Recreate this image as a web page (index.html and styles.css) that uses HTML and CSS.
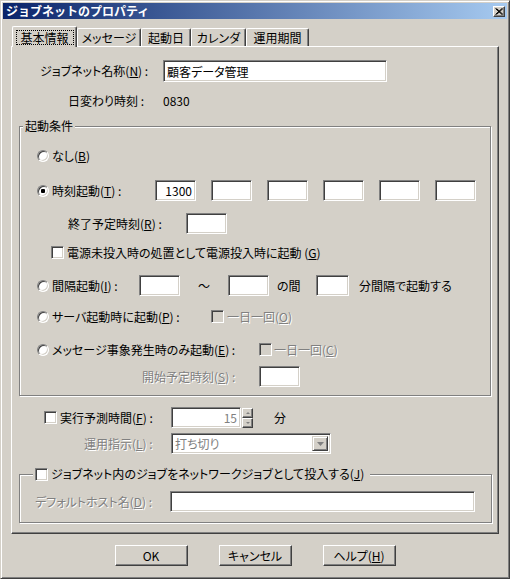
FILE: index.html
```
<!DOCTYPE html>
<html lang="ja">
<head>
    <meta charset="UTF-8">
    <title>ジョブネットのプロパティ</title>
    <link rel="stylesheet" href="styles.css">
</head>
<body>
    <div class="window">
        <div class="titlebar">
            <span>ジョブネットのプロパティ</span>
            <span class="close">
                <svg width="8" height="7" viewBox="0 0 8 7"><path d="M0.5 0.5L7 6.5M1.5 0.5L8 6.5M7 0.5L0.5 6.5M8 0.5L1.5 6.5" stroke="#000" stroke-width="1"/></svg>
            </span>
        </div>

        <div class="tabs">
            <div class="tab active t1"><span class="focus">基本情報</span></div>
            <div class="tab t2">メッセージ</div>
            <div class="tab t3">起動日</div>
            <div class="tab t4">カレンダ</div>
            <div class="tab t5">運用期間</div>
        </div>

        <div class="panel">
            <div class="row r-name">
                <span class="lbl w-name">ジョブネット名称(<u>N</u>) :</span>
                <input class="edit e-name" type="text" value="顧客データ管理">
            </div>
            <div class="row r-date">
                <span class="lbl w-date">日変わり時刻 :</span>
                <span>0830</span>
            </div>

            <fieldset class="group g-start">
                <legend>起動条件</legend>
                <div class="row r-none">
                    <span class="radio"></span>
                    <span>なし(<u>B</u>)</span>
                </div>
                <div class="row r-time">
                    <span class="radio on"></span>
                    <span class="lbl w-time">時刻起動(<u>T</u>) :</span>
                    <input class="edit e-time num" type="text" value="1300">
                    <input class="edit e-time" type="text">
                    <input class="edit e-time" type="text">
                    <input class="edit e-time" type="text">
                    <input class="edit e-time" type="text">
                    <input class="edit e-time last" type="text">
                </div>
                <div class="row r-end">
                    <span class="lbl w-end">終了予定時刻(<u>R</u>) :</span>
                    <input class="edit e-short" type="text">
                </div>
                <div class="row r-power">
                    <span class="check"></span>
                    <span>電源未投入時の処置として電源投入時に起動 (<u>G</u>)</span>
                </div>
                <div class="row r-interval">
                    <span class="radio"></span>
                    <span class="lbl w-interval">間隔起動(<u>I</u>) :</span>
                    <input class="edit e-short" type="text">
                    <span class="tilde">～</span>
                    <input class="edit e-short" type="text">
                    <span class="between">の間</span>
                    <input class="edit e-min" type="text">
                    <span class="every">分間隔で起動する</span>
                </div>
                <div class="row r-server">
                    <span class="radio"></span>
                    <span class="lbl w-server">サーバ起動時に起動(<u>P</u>) :</span>
                    <span class="check off"></span>
                    <span class="dis once">一日一回(<u>O</u>)</span>
                </div>
                <div class="row r-msg">
                    <span class="radio"></span>
                    <span class="lbl w-msg">メッセージ事象発生時のみ起動(<u>E</u>) :</span>
                    <span class="check off"></span>
                    <span class="dis once-b">一日一回(<u>C</u>)</span>
                </div>
                <div class="row r-begin">
                    <span class="lbl dis w-begin">開始予定時刻(<u>S</u>) :</span>
                    <input class="edit e-short" type="text">
                </div>
            </fieldset>

            <div class="row r-exec">
                <span class="check"></span>
                <span class="lbl w-exec">実行予測時間(<u>F</u>) :</span>
                <input class="edit e-spin num dis" type="text" value="15">
                <span class="spin">
                    <span class="sbtn"><span class="tri-up"></span></span>
                    <span class="sbtn"><span class="tri-down"></span></span>
                </span>
                <span class="unit">分</span>
            </div>
            <div class="row r-mode">
                <span class="lbl dis w-mode">運用指示(<u>L</u>) :</span>
                <span class="combo">
                    <span class="dis-plain">打ち切り</span>
                    <span class="drop">
                        <svg width="7" height="4" viewBox="0 0 7 4"><path d="M0 0H7L3.5 4Z" fill="#808080"/></svg>
                    </span>
                </span>
            </div>

            <fieldset class="group g-net">
                <legend><span class="check"></span><span>ジョブネット内のジョブをネットワークジョブとして投入する(<u>J</u>)</span></legend>
                <div class="row r-host">
                    <span class="lbl dis w-host">デフォルトホスト名(<u>D</u>) :</span>
                    <input class="edit e-host" type="text">
                </div>
            </fieldset>
        </div>

        <div class="buttons">
            <button class="btn" type="button">OK</button>
            <button class="btn" type="button">キャンセル</button>
            <button class="btn" type="button">ヘルプ(<u>H</u>)</button>
        </div>
    </div>
</body>
</html>
```

FILE: styles.css
```
body {
    margin: 0;
    background: #d4d0c8;
    font-family: "Noto Sans CJK JP", "Noto Sans", sans-serif;
    font-size: 12px;
    line-height: 16px;
    color: #000;
    font-feature-settings: "palt";
}
u {
    text-decoration: underline;
}
.window {
    box-sizing: border-box;
    width: 510px;
    height: 579px;
    padding: 2px;
    background: #d4d0c8;
    border: 1px solid;
    border-color: #d4d0c8 #404040 #404040 #d4d0c8;
    box-shadow: inset 1px 1px #fff, inset -1px -1px #808080;
}
.titlebar {
    height: 16px;
    display: flex;
    align-items: center;
    justify-content: space-between;
    padding: 0 2px 0 3px;
    background: linear-gradient(to right, #0a246a, #a6caf0);
    color: #fff;
    font-weight: bold;
    font-feature-settings: normal;
}
.close {
    box-sizing: border-box;
    width: 12px;
    height: 11px;
    display: flex;
    align-items: center;
    justify-content: center;
    background: #d4d0c8;
    border: 1px solid;
    border-color: #fff #404040 #404040 #fff;
    box-shadow: inset -1px -1px #808080;
}

/* tabs */
.tabs {
    display: flex;
    align-items: flex-end;
    height: 20px;
    margin: 7px 0 0 9px;
}
.tab {
    box-sizing: border-box;
    height: 18px;
    display: flex;
    align-items: center;
    justify-content: center;
    border-top: 1px solid #fff;
    border-left: 1px solid #fff;
    border-right: 1px solid #404040;
    border-radius: 2px 2px 0 0;
    box-shadow: inset -1px 0 #808080;
}
.tab.active {
    height: 21px;
    margin-bottom: -1px;
    position: relative;
    z-index: 1;
    background: #d4d0c8;
}
.focus {
    width: 58px;
    height: 15px;
    line-height: 15px;
    text-align: center;
    outline: 1px dotted #000;
    outline-offset: -1px;
}
.t1 { width: 65px; }
.t2 { width: 64px; }
.t3 { width: 50px; }
.t4 { width: 55px; }
.t5 { width: 63px; }

/* page */
.panel {
    box-sizing: border-box;
    width: 488px;
    height: 488px;
    margin-left: 8px;
    border: 1px solid;
    border-color: #fff #404040 #404040 #fff;
    box-shadow: inset -1px -1px #808080;
}
.row {
    display: flex;
    align-items: center;
    height: 21px;
    white-space: nowrap;
}
.lbl {
    flex: none;
}
.dis {
    color: #808080;
    text-shadow: 1px 1px 0 #fff;
}
.dis-plain {
    color: #808080;
}

/* controls */
.edit {
    box-sizing: border-box;
    height: 21px;
    margin: 0;
    padding: 0 3px;
    background: #fff;
    border: 1px solid;
    border-color: #808080 #fff #fff #808080;
    box-shadow: inset 1px 1px #404040, inset -1px -1px #d4d0c8;
    font: inherit;
    font-feature-settings: "palt";
    color: #000;
    outline: none;
}
.edit.num {
    text-align: right;
}
.edit.dis {
    color: #808080;
    text-shadow: none;
}
.radio {
    box-sizing: border-box;
    position: relative;
    flex: none;
    width: 12px;
    height: 12px;
    margin-right: 3px;
    border-radius: 50%;
    background: #fff;
    border: 1px solid;
    border-color: #808080 #fff #fff #808080;
    box-shadow: inset 1px 1px #404040, inset -1px -1px #d4d0c8;
}
.radio.on::after {
    content: "";
    position: absolute;
    left: 3px;
    top: 3px;
    width: 4px;
    height: 4px;
    border-radius: 1px;
    background: #000;
}
.check {
    box-sizing: border-box;
    flex: none;
    width: 13px;
    height: 13px;
    background: #fff;
    border: 1px solid;
    border-color: #808080 #fff #fff #808080;
    box-shadow: inset 1px 1px #404040, inset -1px -1px #d4d0c8;
}
.check.off {
    background: #d4d0c8;
}
.btn {
    box-sizing: border-box;
    width: 73px;
    height: 21px;
    padding: 0;
    background: #d4d0c8;
    border: 1px solid;
    border-color: #fff #404040 #404040 #fff;
    box-shadow: inset -1px -1px #808080;
    font: inherit;
    font-feature-settings: "palt";
    color: #000;
}
.spin {
    display: flex;
    flex-direction: column;
    margin-left: 1px;
}
.sbtn {
    box-sizing: border-box;
    width: 11px;
    height: 10px;
    display: flex;
    align-items: center;
    justify-content: center;
    background: #d4d0c8;
    border: 1px solid;
    border-color: #fff #404040 #404040 #fff;
    box-shadow: inset -1px -1px #808080;
}
.tri-up {
    border-left: 2px solid transparent;
    border-right: 2px solid transparent;
    border-bottom: 2px solid #808080;
}
.tri-down {
    border-left: 2px solid transparent;
    border-right: 2px solid transparent;
    border-top: 2px solid #808080;
}
.combo {
    box-sizing: border-box;
    width: 160px;
    height: 21px;
    display: flex;
    align-items: center;
    justify-content: space-between;
    padding: 0 2px 0 3px;
    background: #fff;
    border: 1px solid;
    border-color: #808080 #fff #fff #808080;
    box-shadow: inset 1px 1px #404040, inset -1px -1px #d4d0c8;
}
.drop {
    box-sizing: border-box;
    width: 16px;
    height: 15px;
    display: flex;
    align-items: center;
    justify-content: center;
    background: #d4d0c8;
    border: 1px solid;
    border-color: #d4d0c8 #404040 #404040 #d4d0c8;
    box-shadow: inset 1px 1px #fff, inset -1px -1px #808080;
}

/* group boxes */
.group {
    box-sizing: border-box;
    margin: 0 0 0 7px;
    padding: 0;
    min-inline-size: 0;
    border: 1px solid #808080;
    box-shadow: inset 1px 1px #fff, 1px 1px #fff;
}
.group legend {
    height: 16px;
    padding: 0 2px;
    background: #d4d0c8;
}
.g-start {
    width: 472px;
    margin-top: 9px;
    padding-bottom: 8px;
}
.g-start legend {
    margin-left: 3px;
}
.g-net {
    width: 473px;
    margin-top: 12px;
    padding-bottom: 10px;
}
.g-net legend {
    display: flex;
    align-items: center;
    gap: 3px;
    margin-left: 13px;
    padding-right: 6px;
}

/* rows of the basic page */
.r-name { margin-top: 13px; height: 22px; padding-left: 28px; }
.w-name { width: 123px; }
.e-name { width: 224px; height: 22px; }
.r-date { margin-top: 11px; height: 16px; padding-left: 56px; }
.w-date { width: 95px; }

.r-none { margin-top: 11px; padding-left: 17px; }
.r-time { margin-top: 14px; padding-left: 17px; }
.w-time { width: 103px; }
.e-time { width: 41px; margin-right: 15px; }
.e-time.last { margin-right: 0; }
.r-end { margin-top: 12px; padding-left: 48px; }
.w-end { width: 118px; }
.e-short { width: 41px; }
.r-power { margin-top: 8px; padding-left: 31px; gap: 3px; }
.r-interval { margin-top: 12px; padding-left: 17px; }
.w-interval { width: 87px; }
.tilde { width: 48px; text-align: center; }
.between { margin-left: 8px; width: 39px; }
.e-min { width: 33px; }
.every { margin-left: 10px; }
.r-server { margin-top: 10px; padding-left: 17px; }
.w-server { width: 159px; }
.once { margin-left: 3px; }
.r-msg { margin-top: 12px; padding-left: 17px; }
.w-msg { width: 207px; }
.once-b { margin-left: 2px; }
.r-begin { margin-top: 6px; padding-left: 122px; }
.w-begin { width: 117px; }

.r-exec { margin-top: 11px; padding-left: 32px; }
.w-exec { width: 111px; margin-left: 3px; }
.e-spin { width: 70px; }
.unit { margin-left: 21px; }
.r-mode { margin-top: 5px; padding-left: 72px; }
.w-mode { width: 87px; }

.r-host { margin-top: 9px; padding-left: 15px; }
.w-host { width: 135px; }
.e-host { width: 305px; }

/* dialog buttons */
.buttons {
    display: flex;
    justify-content: center;
    gap: 31px;
    margin-top: 11px;
}
```
